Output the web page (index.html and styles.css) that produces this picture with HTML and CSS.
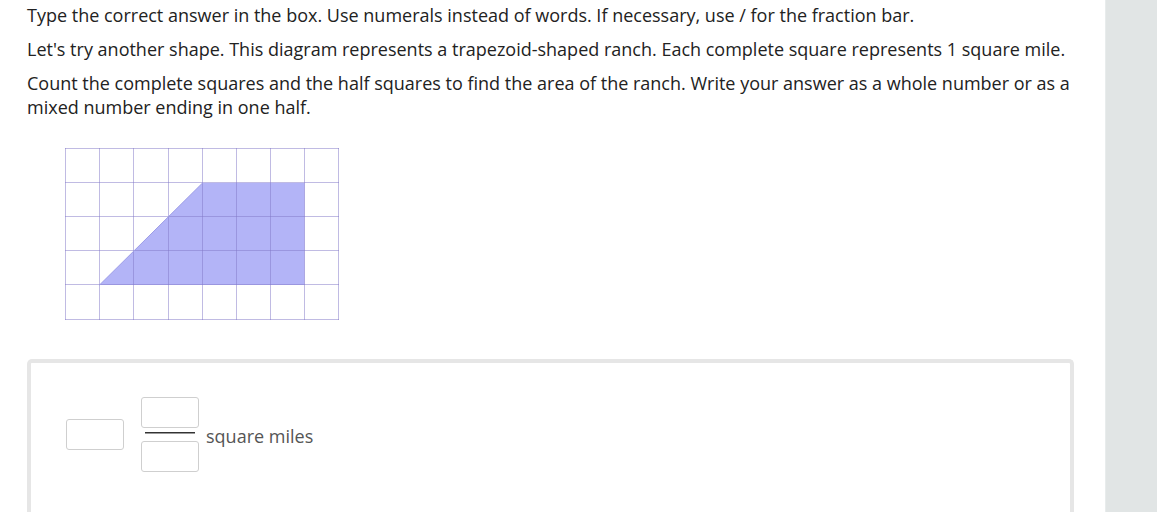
FILE: index.html
```
<!DOCTYPE html>
<html>
<head>
<meta charset="utf-8">
<link rel="stylesheet" href="styles.css">
</head>
<body>
<div class="page">
  <main class="main">
    <p class="para">Type the correct answer in the box. Use numerals instead of words. If necessary, use / for the fraction bar.</p>
    <p class="para">Let's try another shape. This diagram represents a trapezoid-shaped ranch. Each complete square represents 1 square mile.</p>
    <p class="para">Count the complete squares and the half squares to find the area of the ranch. Write your answer as a whole number or as a mixed number ending in one half.</p>
    <div class="figure">
      <svg width="275" height="173" viewBox="0 0 275 173" xmlns="http://www.w3.org/2000/svg">
        <polygon points="34.5,137 239.5,137 239.5,35 137.5,35" fill="#b3b4f7"/>
        <g stroke="rgba(130,120,200,0.5)" stroke-width="1" fill="none">
          <line x1="0.5" y1="0" x2="0.5" y2="172"/>
          <line x1="34.5" y1="0" x2="34.5" y2="172"/>
          <line x1="68.5" y1="0" x2="68.5" y2="172"/>
          <line x1="103.5" y1="0" x2="103.5" y2="172"/>
          <line x1="137.5" y1="0" x2="137.5" y2="172"/>
          <line x1="171.5" y1="0" x2="171.5" y2="172"/>
          <line x1="205.5" y1="0" x2="205.5" y2="172"/>
          <line x1="239.5" y1="0" x2="239.5" y2="172"/>
          <line x1="273.5" y1="0" x2="273.5" y2="172"/>
          <line x1="0" y1="0.5" x2="274" y2="0.5"/>
          <line x1="0" y1="34.5" x2="274" y2="34.5"/>
          <line x1="0" y1="68.5" x2="274" y2="68.5"/>
          <line x1="0" y1="102.5" x2="274" y2="102.5"/>
          <line x1="0" y1="136.5" x2="274" y2="136.5"/>
          <line x1="0" y1="171.5" x2="274" y2="171.5"/>
        </g>
        <line x1="34.5" y1="137" x2="137.5" y2="35" stroke="#9d9de6" stroke-width="1"/>
      </svg>
    </div>
    <div class="answer">
      <div class="row">
        <input class="box whole" type="text">
        <div class="frac">
          <input class="box num" type="text">
          <div class="bar"></div>
          <input class="box den" type="text">
        </div>
        <span class="unit">square miles</span>
      </div>
    </div>
  </main>
  <aside class="side"></aside>
</div>
</body>
</html>
```
FILE: styles.css
```
html, body {
  margin: 0;
  padding: 0;
  background: #ffffff;
  overflow: hidden;
}
.page {
  display: flex;
  width: 1157px;
  height: 512px;
}
.main {
  width: 1106px;
  box-sizing: border-box;
  padding: 3px 31px 0 27px;
  font-family: "Open Sans", sans-serif;
  font-size: 18px;
  line-height: 24px;
  color: #222222;
  height: 512px;
  overflow: hidden;
}
.para {
  margin: 0 0 10px 0;
}
.figure {
  margin-top: 29px;
  padding-left: 38px;
  height: 173px;
}
.figure svg {
  display: block;
}
.answer {
  margin-top: 38px;
  border: 4px solid #e6e6e6;
  border-bottom: none;
  border-radius: 5px 5px 0 0;
  height: 160px;
  box-sizing: border-box;
  padding: 34px 0 0 35px;
}
.row {
  display: flex;
  align-items: center;
}
.box {
  display: block;
  box-sizing: border-box;
  width: 58px;
  height: 31px;
  border: 1px solid #cfcfcf;
  border-radius: 3px;
  background: #ffffff;
  margin: 0;
  padding: 0;
}
.frac {
  display: flex;
  flex-direction: column;
  align-items: center;
  margin-left: 17px;
  width: 58px;
}
.bar {
  width: 50px;
  height: 1px;
  background: #333333;
  margin: 4px 0 7px 0;
  border-bottom: 1px solid #999;
}
.unit {
  margin-left: 7px;
  color: #555555;
  margin-top: 2px;
}
.side {
  width: 51px;
  background: #e1e5e5;
  border-left: 1px solid #e8ecec;
}
```
